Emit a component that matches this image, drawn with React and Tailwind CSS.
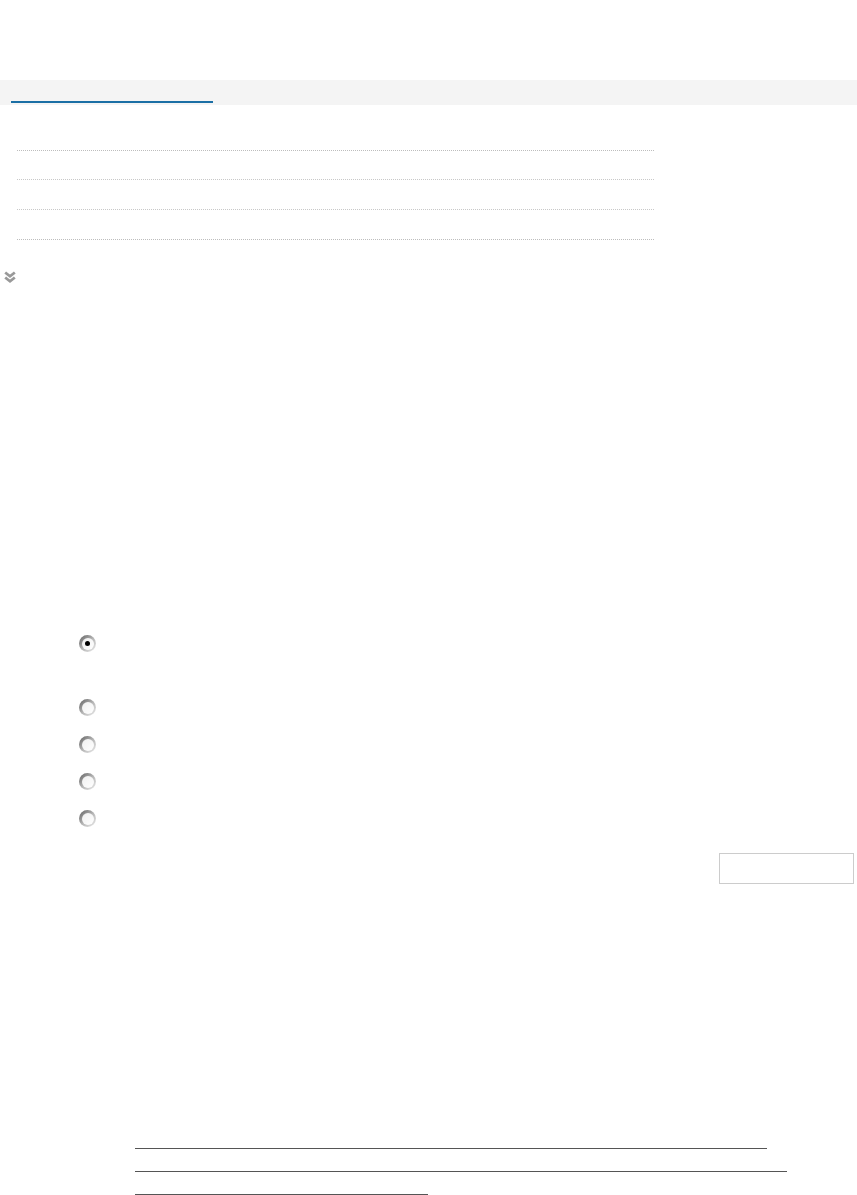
import React from "react";

const radios = [
  { checked: true, gap: "mt-0" },
  { checked: false, gap: "mt-[47px]" },
  { checked: false, gap: "mt-[20px]" },
  { checked: false, gap: "mt-[20px]" },
  { checked: false, gap: "mt-[20px]" },
];

const Radio = ({ checked }) => (
  <div className="w-[17px] h-[17px] rounded-full bg-gradient-to-br from-[#5f5f5f] via-[#b4b4b4] to-[#efefef] flex items-center justify-center">
    <div className="w-[12px] h-[12px] rounded-full bg-gradient-to-br from-[#f0f0f0] to-white flex items-center justify-center">
      {checked && <div className="w-[5px] h-[5px] rounded-full bg-black" />}
    </div>
  </div>
);

const App = () => {
  return (
    <div className="h-[1195px] bg-white font-['Liberation_Sans',sans-serif] overflow-hidden">
      <div className="h-20" />

      {/* tab strip */}
      <div className="h-[25px] bg-[#f4f4f4] pl-[11px] flex items-end pb-[2px]">
        <div className="w-[202px] h-[2px] bg-[#1b6fa5]" />
      </div>

      {/* dotted rows */}
      <div className="ml-[17px] w-[637px] mt-[45px] flex flex-col">
        <div className="border-t border-dotted border-[#bdbdbd]" />
        <div className="mt-[28px] border-t border-dotted border-[#c8c8c8]" />
        <div className="mt-[29px] border-t border-dotted border-[#c8c8c8]" />
        <div className="mt-[29px] border-t border-dotted border-[#bdbdbd]" />
      </div>

      {/* expand toggle */}
      <div className="ml-[4px] mt-[31px] w-[12px] h-[13px]">
        <svg width="12" height="13" viewBox="0 0 12 13" fill="none">
          <path d="M1.2 1.5 L6 5.3 L10.8 1.5" stroke="#999999" strokeWidth="2.8" />
          <path d="M1.2 6.5 L6 10.3 L10.8 6.5" stroke="#999999" strokeWidth="2.8" />
        </svg>
      </div>

      {/* radio options */}
      <div className="ml-[79px] mt-[351px] flex flex-col">
        {radios.map((r, i) => (
          <div key={i} className={r.gap}>
            <Radio checked={r.checked} />
          </div>
        ))}
      </div>

      {/* input box */}
      <div className="ml-[719px] mt-[26px] w-[135px] h-[31px] border border-[#cccccc] bg-white" />

      {/* underlined links */}
      <div className="ml-[135px] mt-[264px] flex flex-col gap-[22px]">
        <div className="w-[632px] border-t border-[#555555]" />
        <div className="w-[652px] border-t border-[#555555]" />
        <div className="w-[293px] border-t border-[#555555]" />
      </div>
    </div>
  );
};

export default App;
